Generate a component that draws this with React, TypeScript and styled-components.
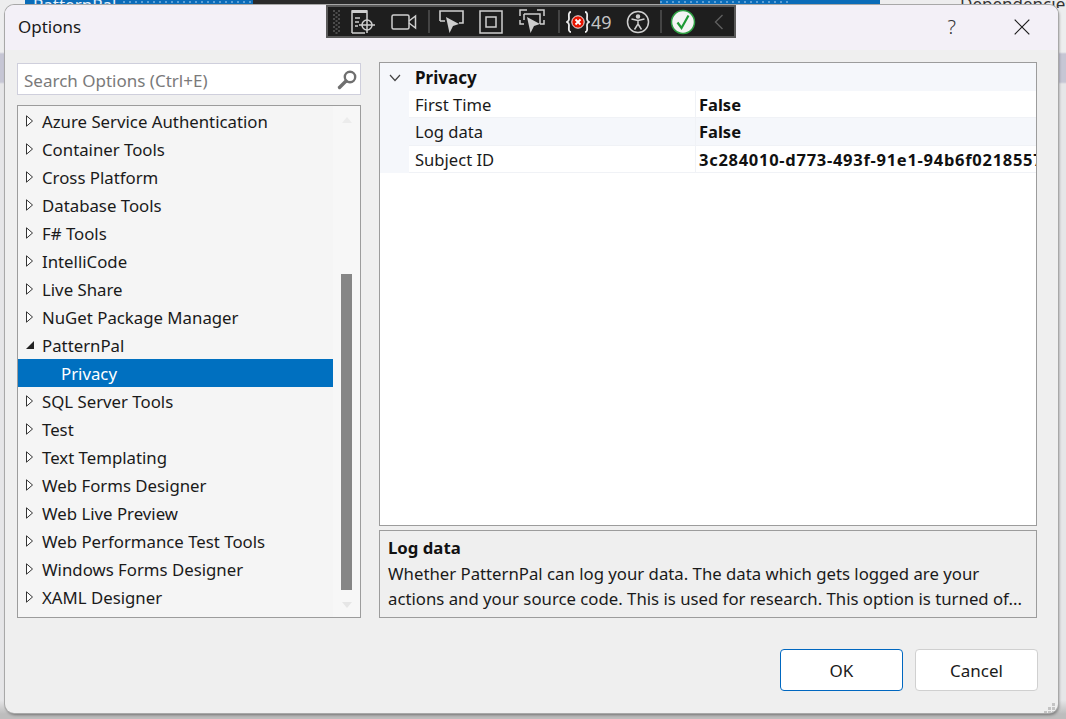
import React from 'react';
import styled, {createGlobalStyle} from 'styled-components';

const treeItems = [
    {label: "Azure Service Authentication"},
    {label: "Container Tools"},
    {label: "Cross Platform"},
    {label: "Database Tools"},
    {label: "F# Tools"},
    {label: "IntelliCode"},
    {label: "Live Share"},
    {label: "NuGet Package Manager"},
    {label: "PatternPal", open: true},
    {label: "Privacy", child: true, selected: true},
    {label: "SQL Server Tools"},
    {label: "Test"},
    {label: "Text Templating"},
    {label: "Web Forms Designer"},
    {label: "Web Live Preview"},
    {label: "Web Performance Test Tools"},
    {label: "Windows Forms Designer"},
    {label: "XAML Designer"},
];

const gridRows = [
    {name: "First Time", value: "False"},
    {name: "Log data", value: "False", tinted: true},
    {name: "Subject ID", value: "3c284010-d773-493f-91e1-94b6f0218557", wide: true},
];

const App: React.FC = () => {
    return (
        <Desktop>
            <GlobalStyle />
            <BackdropStrip>
                <BackdropBlue>PatternPal</BackdropBlue>
                <BackdropDark>
                    <svg width="80" height="5" viewBox="0 0 80 5" fill="none" stroke="#b8b8b8" strokeWidth="1">
                        <path d="M28 0 V4 M35 4 A6 6 0 0 1 47 4 M62 0 V4" />
                    </svg>
                </BackdropDark>
                <BackdropBlueRight>
                    <svg width="70" height="5" viewBox="0 0 70 5">
                        <path d="M0 0 H11 L5.5 5 Z" fill="#e8f2fa" />
                        <path d="M28 4 V1 H39 V4" fill="none" stroke="#e8f2fa" strokeWidth="1.4" />
                        <path d="M54 0 L58 4 L62 0" fill="none" stroke="#e8f2fa" strokeWidth="1.4" />
                    </svg>
                </BackdropBlueRight>
                <BackdropLabel>Dependencies</BackdropLabel>
            </BackdropStrip>
            <Dialog>
                <TitleBar>
                    <Title>Options</Title>
                    <TitleActions>
                        <HelpMark>?</HelpMark>
                        <svg width="16" height="16" viewBox="0 0 16 16">
                            <path d="M0.7 0.7 L15.3 15.3 M15.3 0.7 L0.7 15.3" stroke="#1a1a1a" strokeWidth="1.2" fill="none" />
                        </svg>
                    </TitleActions>
                </TitleBar>
                <Body>
                    <Columns>
                        <LeftColumn>
                            <SearchBox>
                                <SearchText>Search Options (Ctrl+E)</SearchText>
                                <svg width="22" height="22" viewBox="0 0 22 22">
                                    <circle cx="14" cy="8" r="5.2" stroke="#6f6f6f" strokeWidth="2.4" fill="none" />
                                    <path d="M10 12 L3.5 18.5" stroke="#6f6f6f" strokeWidth="3.4" strokeLinecap="round" />
                                </svg>
                            </SearchBox>
                            <Tree>
                                <TreeList>
                                    {treeItems.map((item) => (
                                        <TreeRow key={item.label} $selected={!!item.selected} $child={!!item.child}>
                                            {!item.child && (
                                                <svg width="10" height="12" viewBox="0 0 10 12">
                                                    {item.open
                                                        ? <path d="M9 2 V10 H1 Z" fill="#222" />
                                                        : <path d="M1.5 0.8 L7.5 6 L1.5 11.2 Z" fill="#fff" stroke="#333" strokeWidth="1" />}
                                                </svg>
                                            )}
                                            <span>{item.label}</span>
                                        </TreeRow>
                                    ))}
                                </TreeList>
                                <ScrollTrack>
                                    <svg width="12" height="8" viewBox="0 0 12 8"><path d="M6 1 L11 7 H1 Z" fill="#ececec" /></svg>
                                    <ThumbArea><Thumb /></ThumbArea>
                                    <svg width="12" height="8" viewBox="0 0 12 8"><path d="M1 1 H11 L6 7 Z" fill="#e6e6e6" /></svg>
                                </ScrollTrack>
                            </Tree>
                        </LeftColumn>
                        <RightColumn>
                            <PropertyGrid>
                                <GroupRow>
                                    <Gutter>
                                        <svg width="12" height="8" viewBox="0 0 12 8">
                                            <path d="M1 1 L6 6.5 L11 1" stroke="#444" strokeWidth="1.2" fill="none" />
                                        </svg>
                                    </Gutter>
                                    <GroupName>Privacy</GroupName>
                                </GroupRow>
                                {gridRows.map((row) => (
                                    <PropRow key={row.name} $tinted={!!row.tinted}>
                                        <PropName>{row.name}</PropName>
                                        <PropValue $wide={!!row.wide}>{row.value}</PropValue>
                                    </PropRow>
                                ))}
                            </PropertyGrid>
                            <Description>
                                <DescriptionTitle>Log data</DescriptionTitle>
                                <DescriptionLine>Whether PatternPal can log your data. The data which gets logged are your</DescriptionLine>
                                <DescriptionLine>actions and your source code. This is used for research. This option is turned of...</DescriptionLine>
                            </Description>
                        </RightColumn>
                    </Columns>
                    <Footer>
                        <DialogButton $primary>OK</DialogButton>
                        <DialogButton>Cancel</DialogButton>
                    </Footer>
                </Body>
                <Grip>
                    <svg width="14" height="14" viewBox="0 0 14 14" fill="#c4c4c4">
                        <rect x="10" y="2" width="3" height="3" />
                        <rect x="6" y="6" width="3" height="3" />
                        <rect x="10" y="6" width="3" height="3" />
                        <rect x="2" y="10" width="3" height="3" />
                        <rect x="6" y="10" width="3" height="3" />
                        <rect x="10" y="10" width="3" height="3" />
                    </svg>
                </Grip>
            </Dialog>
            <DebugToolbar>
                <svg width="12" height="26" viewBox="0 0 12 26" fill="#4c4c4c">
                    {[1, 5, 9, 13, 17, 21].map((y) => (
                        <g key={y}>
                            <rect x="1" y={y} width="2" height="2" />
                            <rect x="6" y={y} width="2" height="2" />
                            <rect x="3.5" y={y + 2} width="2" height="2" />
                        </g>
                    ))}
                </svg>
                <ToolIcon $left={23}>
                    <svg width="26" height="26" viewBox="0 0 26 26" fill="none" stroke="#cfcfcf" strokeWidth="1.5">
                        <path d="M1 24 V2 H16 V8" />
                        <rect x="1" y="1" width="15" height="3" fill="#cfcfcf" stroke="none" />
                        <path d="M4 9 H9 M4 13 H8 M4 17 H7 M1 24 H14" />
                        <circle cx="16" cy="16" r="5" />
                        <path d="M16 8 V24 M8 16 H24" />
                    </svg>
                </ToolIcon>
                <ToolIcon $left={63}>
                    <svg width="26" height="18" viewBox="0 0 26 18" fill="none" stroke="#cfcfcf" strokeWidth="1.5">
                        <rect x="1" y="2" width="17" height="14" rx="1.5" />
                        <path d="M18 8 L24.5 3 V15 L18 10" />
                    </svg>
                </ToolIcon>
                <ToolDivider $left={100} />
                <ToolIcon $left={110}>
                    <svg width="26" height="26" viewBox="0 0 26 26" fill="none" stroke="#cfcfcf" strokeWidth="1.6">
                        <path d="M2 12 V2 H25 V14 H21 M2 12 H7" />
                        <path d="M8 8 L21 15 L15 17 L11.5 24 Z" fill="#cfcfcf" stroke="none" />
                    </svg>
                </ToolIcon>
                <ToolIcon $left={151}>
                    <svg width="24" height="24" viewBox="0 0 24 24" fill="none" stroke="#cfcfcf" strokeWidth="1.5">
                        <rect x="1" y="1" width="22" height="22" />
                        <rect x="7" y="7" width="10" height="10" />
                    </svg>
                </ToolIcon>
                <ToolIcon $left={191}>
                    <svg width="26" height="26" viewBox="0 0 26 26" fill="none" stroke="#cfcfcf" strokeWidth="1.5">
                        <path d="M1 7 V1 H8 M18 1 H25 V7 M1 11 V15 H5 M21 15 H25 V11 M5 5 H21 V15 M5 5 V11" />
                        <path d="M8 8 L21 15 L15 17 L11.5 24 Z" fill="#cfcfcf" stroke="none" />
                    </svg>
                </ToolIcon>
                <ToolDivider $left={230} />
                <ToolIcon $left={238}>
                    <ErrorIcon>
                        <svg width="24" height="24" viewBox="0 0 24 24">
                            <path d="M5 2 C2 2 3 6 3 9 C3 11 1 12 1 12 C1 12 3 13 3 15 C3 18 2 22 5 22 M19 2 C22 2 21 6 21 9 C21 11 23 12 23 12 C23 12 21 13 21 15 C21 18 22 22 19 22" fill="none" stroke="#ececec" strokeWidth="1.8" />
                            <circle cx="12" cy="12" r="6.2" fill="#e51400" stroke="#f2f2f2" strokeWidth="1" />
                            <path d="M9.5 9.5 L14.5 14.5 M14.5 9.5 L9.5 14.5" stroke="#fff" strokeWidth="1.8" />
                        </svg>
                        <ErrorCount>49</ErrorCount>
                    </ErrorIcon>
                </ToolIcon>
                <ToolIcon $left={298}>
                    <svg width="24" height="24" viewBox="0 0 24 24" fill="none" stroke="#cfcfcf" strokeWidth="1.5">
                        <circle cx="12" cy="12" r="10.5" />
                        <circle cx="12" cy="6.6" r="1.5" fill="#cfcfcf" />
                        <path d="M5.5 9 L12 10.5 L18.5 9 M12 10.5 V14 L8.5 19.5 M12 14 L15.5 19.5" />
                    </svg>
                </ToolIcon>
                <ToolDivider $left={332} />
                <ToolIcon $left={342}>
                    <svg width="26" height="26" viewBox="0 0 26 26">
                        <circle cx="13" cy="13" r="11.5" fill="#f4f4f4" stroke="#2ea043" strokeWidth="1.5" />
                        <path d="M7.5 13.5 L11.5 19 L18.5 6.5" fill="none" stroke="#1f9a35" strokeWidth="2.2" />
                    </svg>
                </ToolIcon>
                <ToolIcon $left={386}>
                    <svg width="10" height="16" viewBox="0 0 10 16">
                        <path d="M8.5 1 L1.5 8 L8.5 15" fill="none" stroke="#5f5f5f" strokeWidth="1.4" />
                    </svg>
                </ToolIcon>
            </DebugToolbar>
        </Desktop>
    );
};

const GlobalStyle = createGlobalStyle`
    html, body {
        margin: 0;
        padding: 0;
        background: #d9d9dc;
    }
    * {
        box-sizing: border-box;
    }
`;

const Desktop = styled.div`
    position: relative;
    width: 1066px;
    height: 719px;
    overflow: hidden;
    padding: 5px 8px 6px 5px;
    background: linear-gradient(#ededee 0, #ededee 52px, #c6c6d4 54px, #c6c6d4 82px, #e6e6e8 84px, #e6e6e8 700px, #bdbdbd 714px);
    font-family: "Noto Sans", "Open Sans", sans-serif;
    color: #1a1a1a;
`;

const BackdropStrip = styled.div`
    position: absolute;
    top: 0;
    left: 0;
    width: 1066px;
    height: 8px;
    display: flex;
    overflow: hidden;
`;

const BackdropBlue = styled.div`
    flex: none;
    margin-left: 25px;
    width: 228px;
    height: 8px;
    overflow: hidden;
    background-color: #0a6cb8;
    background-image: repeating-linear-gradient(90deg, #5b9fd6 0 2px, transparent 2px 6px);
    background-size: 130px 2px;
    background-position: right 1px;
    background-repeat: no-repeat;
    color: #e8f2fa;
    font-size: 17px;
    line-height: 8px;
    padding: 1px 0 0 8px;
`;

const BackdropDark = styled.div`
    flex: none;
    width: 407px;
    background: #2b2b2b;
`;

const BackdropBlueRight = styled.div`
    flex: none;
    width: 220px;
    padding-left: 150px;
    background-color: #0a6cb8;
    background-image: repeating-linear-gradient(90deg, #5b9fd6 0 2px, transparent 2px 6px);
    background-size: 130px 2px;
    background-position: left 1px;
    background-repeat: no-repeat;
`;

const BackdropLabel = styled.div`
    flex: none;
    margin-left: 80px;
    font-size: 17px;
    line-height: 8px;
    white-space: nowrap;
    color: #333;
`;

const Dialog = styled.div`
    position: relative;
    width: 1053px;
    height: 708px;
    display: flex;
    flex-direction: column;
    border-radius: 9px;
    overflow: hidden;
    background: #efefef;
    box-shadow: 0 0 0 1px #a8a8a8, 1px 2px 3px rgba(0, 0, 0, 0.4);
`;

const TitleBar = styled.div`
    height: 45px;
    flex: none;
    display: flex;
    align-items: center;
    justify-content: space-between;
    padding: 0 28px 2px 13px;
    background: #f3f0f7;
`;

const Title = styled.div`
    font-size: 17px;
    color: #1a1a1a;
`;

const TitleActions = styled.div`
    display: flex;
    align-items: center;
    gap: 58px;
`;

const HelpMark = styled.div`
    font-size: 20px;
    font-weight: 300;
    color: #333;
`;

const Body = styled.div`
    flex: 1;
    display: flex;
    flex-direction: column;
    padding: 12px 20px 22px 12px;
`;

const Columns = styled.div`
    display: flex;
    gap: 18px;
    height: 556px;
`;

const LeftColumn = styled.div`
    width: 344px;
    display: flex;
    flex-direction: column;
    gap: 10px;
    padding-top: 1px;
`;

const SearchBox = styled.div`
    height: 32px;
    flex: none;
    display: flex;
    align-items: center;
    justify-content: space-between;
    padding: 1px 2px 0 6px;
    background: #fff;
    border: 1px solid #cfcfdc;
`;

const SearchText = styled.span`
    font-size: 17px;
    line-height: 28px;
    padding-top: 2px;
    color: #7a7a7a;
`;

const Tree = styled.div`
    flex: 1;
    display: flex;
    border: 1px solid #9c9c9c;
    background: #f5f5f5;
    min-height: 0;
`;

const TreeList = styled.div`
    width: 315px;
    padding-top: 1px;
    overflow: hidden;
`;

const TreeRow = styled.div<{ $selected: boolean; $child: boolean }>`
    height: 28px;
    display: flex;
    align-items: center;
    gap: 7px;
    padding-left: ${(props) => props.$child ? "43px" : "7px"};
    font-size: 16.8px;
    white-space: nowrap;
    background: ${(props) => props.$selected ? "#0070c0" : "transparent"};
    color: ${(props) => props.$selected ? "#fff" : "#1a1a1a"};
`;

const ScrollTrack = styled.div`
    flex: 1;
    display: flex;
    flex-direction: column;
    align-items: center;
    justify-content: space-between;
    padding: 10px 0 8px;
    background: #f7f7f7;
`;

const ThumbArea = styled.div`
    flex: 1;
    width: 100%;
    display: flex;
    justify-content: center;
    align-items: flex-end;
    padding: 0 0 11px;
`;

const Thumb = styled.div`
    width: 11px;
    height: 316px;
    background: #868686;
`;

const RightColumn = styled.div`
    width: 658px;
    display: flex;
    flex-direction: column;
    gap: 4px;
`;

const PropertyGrid = styled.div`
    height: 464px;
    flex: none;
    background: #fff;
    border: 1px solid #9c9c9c;
    overflow: hidden;
`;

const GroupRow = styled.div`
    height: 28px;
    display: flex;
    align-items: center;
    padding-top: 1px;
    background: #f5f7fb;
`;

const Gutter = styled.div`
    width: 29px;
    padding-left: 9px;
    display: flex;
    align-items: center;
`;

const GroupName = styled.div`
    padding-left: 6px;
    font-size: 17px;
    font-weight: 700;
    color: #111;
`;

const PropRow = styled.div<{ $tinted: boolean }>`
    height: ${(props) => props.$tinted ? "28px" : "27px"};
    margin-left: 29px;
    display: flex;
    align-items: center;
    border-bottom: 1px solid #f0f2f6;
    background: ${(props) => props.$tinted ? "#f5f7fb" : "#fff"};
    box-shadow: -29px 0 0 #f5f7fb;
`;

const PropName = styled.div`
    width: 287px;
    height: 100%;
    display: flex;
    align-items: center;
    padding-left: 6px;
    font-size: 16.6px;
    border-right: 1px solid #f0f2f6;
`;

const PropValue = styled.div<{ $wide: boolean }>`
    flex: 1;
    min-width: 0;
    overflow: hidden;
    white-space: nowrap;
    padding-left: 3px;
    font-size: 16.5px;
    font-weight: 700;
    letter-spacing: ${(props) => props.$wide ? "0.72px" : "0"};
    color: #111;
`;

const Description = styled.div`
    height: 88px;
    flex: none;
    padding: 4px 8px;
    border: 1px solid #9c9c9c;
    background: #efefef;
    font-size: 16.75px;
    line-height: 25px;
    white-space: nowrap;
`;

const DescriptionTitle = styled.div`
    font-weight: 700;
    color: #111;
    margin-bottom: 1px;
`;

const DescriptionLine = styled.div`
    color: #1a1a1a;
`;

const Footer = styled.div`
    display: flex;
    justify-content: flex-end;
    gap: 12px;
    margin-top: 31px;
`;

const DialogButton = styled.div<{ $primary?: boolean }>`
    width: 123px;
    height: 42px;
    display: flex;
    align-items: center;
    justify-content: center;
    border-radius: 4px;
    background: #fff;
    font-size: 17px;
    border: 1px solid ${(props) => props.$primary ? "#0067c0" : "#d0d0d0"};
`;

const Grip = styled.div`
    position: absolute;
    right: 2px;
    bottom: 1px;
    width: 14px;
    height: 14px;
`;

const DebugToolbar = styled.div`
    position: absolute;
    top: 5px;
    left: 326px;
    width: 410px;
    height: 33px;
    padding: 2px 0 0 4px;
    background: #1e1e1e;
    border: 2px solid #5a5a5a;
`;

const ToolIcon = styled.div<{ $left: number }>`
    position: absolute;
    top: 0;
    bottom: 0;
    left: ${(props) => props.$left}px;
    display: flex;
    align-items: center;
`;

const ToolDivider = styled.div<{ $left: number }>`
    position: absolute;
    top: 3px;
    bottom: 3px;
    left: ${(props) => props.$left}px;
    width: 2px;
    background: #444;
`;

const ErrorIcon = styled.div`
    display: flex;
    align-items: center;
    gap: 1px;
`;

const ErrorCount = styled.span`
    font-size: 18px;
    color: #c4c4c4;
`;

export default App;
